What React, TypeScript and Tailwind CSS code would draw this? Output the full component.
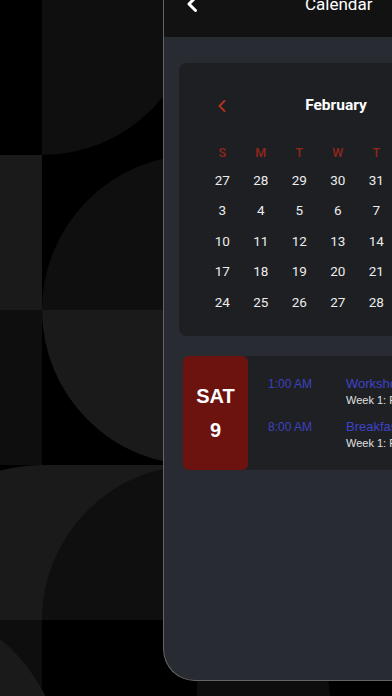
import React from "react";

const weeks: number[][] = [
  [27, 28, 29, 30, 31, 1, 2],
  [3, 4, 5, 6, 7, 8, 9],
  [10, 11, 12, 13, 14, 15, 16],
  [17, 18, 19, 20, 21, 22, 23],
  [24, 25, 26, 27, 28, 1, 2],
];
const days = ["S", "M", "T", "W", "T", "F", "S"];

const events = [
  { time: "1:00 AM", title: "Workshop", sub: "Week 1: Foundations" },
  { time: "8:00 AM", title: "Breakfast", sub: "Week 1: Foundations" },
];

function Background() {
  return (
    <svg
      className="absolute inset-0"
      width="392"
      height="696"
      viewBox="0 0 392 696"
    >
      <rect x="0" y="0" width="392" height="696" fill="#000" />
      <path d="M42 0 H197 A155 155 0 0 1 42 155 Z" fill="#0f0f0f" />
      <rect x="-113" y="155" width="155" height="155" fill="#1a1a1a" />
      <path d="M197 310 V155 A155 155 0 0 0 42 310 Z" fill="#0f0f0f" />
      <rect x="-113" y="310" width="155" height="155" fill="#0e0e0e" />
      <path d="M197 310 H42 A155 155 0 0 0 197 465 Z" fill="#1a1a1a" />
      <path d="M42 620 V465 A155 155 0 0 0 -113 620 Z" fill="#1a1a1a" />
      <rect x="42" y="465" width="155" height="155" fill="#1a1a1a" />
      <path d="M197 620 V465 A155 155 0 0 0 42 620 Z" fill="#0f0f0f" />
      <rect x="-113" y="620" width="155" height="155" fill="#0e0e0e" />
      <circle cx="-113" cy="775" r="177" fill="#1a1a1a" />
      <path d="M197 620 H322 L330 696 H197 Z" fill="#0d0d0d" />
    </svg>
  );
}

export default function App() {
  return (
    <div className="relative w-[392px] h-[696px] overflow-hidden bg-black">
      <Background />
      <div className="relative ml-[163px] mt-[-40px] w-[420px] h-[721px] flex flex-col border-l border-b border-[#646464] rounded-bl-[32px] overflow-hidden bg-[#282b31]">
        {/* Header */}
        <div className="h-[77px] shrink-0 bg-[#121212]">
          <div className="mt-[32px] h-[24px] flex items-center">
            <svg
              className="ml-[22px]"
              width="12"
              height="16"
              viewBox="0 0 12 16"
              fill="none"
            >
              <polyline
                points="9.5,1.5 3,8 9.5,14.5"
                stroke="#ffffff"
                strokeWidth="3"
                strokeLinecap="round"
                strokeLinejoin="round"
              />
            </svg>
            <span className="ml-[107px] text-[17px] leading-none text-white font-['Roboto',sans-serif]">
              Calendar
            </span>
          </div>
        </div>

        {/* Body */}
        <div className="flex-1 pt-[26px] pl-[15px] font-['Roboto',sans-serif]">
          {/* Calendar card */}
          <div className="w-[319px] h-[273px] rounded-lg bg-[#1e1f23] px-[24px] pt-[32px]">
            <div className="grid grid-cols-[38.5px_1fr_38.5px] h-[22px] items-center">
              <div className="flex justify-center">
                <svg width="8" height="12" viewBox="0 0 8 12" fill="none">
                  <polyline
                    points="6.5,1 1.5,6 6.5,11"
                    stroke="#b3321d"
                    strokeWidth="1.8"
                    strokeLinecap="round"
                    strokeLinejoin="round"
                  />
                </svg>
              </div>
              <div className="text-center pr-[5px] text-[15.5px] font-bold text-white leading-none">
                February
              </div>
              <div />
            </div>
            <div className="mt-[26px] grid grid-cols-[repeat(7,38.5px)] h-[20px] items-center">
              {days.map((d, i) => (
                <div
                  key={i}
                  className="text-center text-[12.5px] font-medium text-[#93261a] leading-none"
                >
                  {d}
                </div>
              ))}
            </div>
            <div className="mt-[2px] flex flex-col">
              {weeks.map((w, wi) => (
                <div
                  key={wi}
                  className="grid grid-cols-[repeat(7,38.5px)] h-[30.5px] items-center"
                >
                  {w.map((n, ni) => (
                    <div
                      key={ni}
                      className="text-center text-[13.5px] text-[#ececec] leading-none"
                    >
                      {n}
                    </div>
                  ))}
                </div>
              ))}
            </div>
          </div>

          {/* Event row */}
          <div className="mt-[20px] ml-[4px] h-[114px] flex bg-[#1f2024] rounded-md">
            <div className="w-[65px] shrink-0 rounded-md bg-[#6c1310] flex flex-col items-center pt-[28px] gap-[10px] font-['Liberation_Sans',sans-serif] font-bold text-white">
              <div className="text-[20px] leading-[24px]">SAT</div>
              <div className="text-[20px] leading-[24px]">9</div>
            </div>
            <div className="pl-[20px] pt-[19px] flex flex-col gap-[11px] font-['Liberation_Sans',sans-serif]">
              {events.map((e, i) => (
                <div key={i} className="flex">
                  <div className="w-[78px] shrink-0 text-[12px] leading-[18px] text-[#3d42bf]">
                    {e.time}
                  </div>
                  <div className="flex flex-col whitespace-nowrap">
                    <div className="text-[13px] leading-[18px] text-[#3c44c8]">
                      {e.title}
                    </div>
                    <div className="text-[11px] leading-[14px] text-[#e0e0e0]">
                      {e.sub}
                    </div>
                  </div>
                </div>
              ))}
            </div>
          </div>
        </div>
      </div>
    </div>
  );
}
